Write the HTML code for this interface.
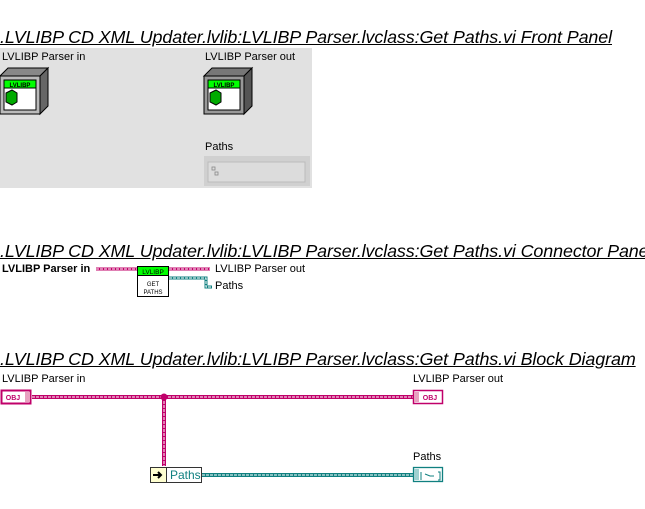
<!DOCTYPE html><html><head><style>
body{margin:0;width:645px;height:509px;background:#fff;position:relative;overflow:hidden;font-family:"Liberation Sans",sans-serif}
.t{position:absolute;left:0;font-size:17.9px;font-style:italic;text-decoration:underline;white-space:nowrap;color:#000;letter-spacing:-0.1px}
.l{position:absolute;font-size:11px;white-space:nowrap;color:#000}
</style></head><body>
<div class="t" style="top:27px">.LVLIBP CD XML Updater.lvlib:LVLIBP Parser.lvclass:Get Paths.vi Front Panel</div>
<div style="position:absolute;left:0;top:48px;width:312px;height:140px;background:#e1e1e1"></div>
<div class="l" style="left:2px;top:51px">LVLIBP Parser in</div>
<div class="l" style="left:205px;top:51px">LVLIBP Parser out</div>
<div class="l" style="left:205px;top:141px">Paths</div>
<svg style="position:absolute;left:0;top:0" width="645" height="509">
<g transform="translate(0,68)">
<polygon points="0,8 8,0 48,0 40,8" fill="#888" stroke="#000"/>
<polygon points="40,8 48,0 48,38 40,46" fill="#666" stroke="#000"/>
<rect x="0" y="8" width="40" height="38" fill="#bbb" stroke="#000"/>
<rect x="4" y="12" width="32" height="30" fill="#fff" stroke="#000"/>
<rect x="4" y="12" width="32" height="8" fill="#0f0" stroke="#000"/>
<text x="20" y="19" font-size="6" text-anchor="middle" font-family="Liberation Sans" font-weight="bold">LVLIBP</text>
<polygon points="6,25 12,22 17,25 17,34 12,37 6,34" fill="#0a0" stroke="#000"/>
</g>
<g transform="translate(204,68)">
<polygon points="0,8 8,0 48,0 40,8" fill="#777" stroke="#000"/>
<polygon points="40,8 48,0 48,38 40,46" fill="#555" stroke="#000"/>
<rect x="0" y="8" width="40" height="38" fill="#999" stroke="#000"/>
<rect x="4" y="12" width="32" height="30" fill="#fff" stroke="#000"/>
<rect x="4" y="12" width="32" height="8" fill="#0f0" stroke="#000"/>
<text x="20" y="19" font-size="6" text-anchor="middle" font-family="Liberation Sans" font-weight="bold">LVLIBP</text>
<polygon points="6,25 12,22 17,25 17,34 12,37 6,34" fill="#0a0" stroke="#000"/>
</g>
<rect x="204" y="156" width="106" height="30" fill="#d0d0d0"/>
<rect x="208" y="162" width="97" height="20" fill="#dcdcdc" stroke="#bbb"/>
<rect x="212" y="167" width="3" height="3" fill="none" stroke="#888" stroke-width=".8"/><rect x="215" y="172" width="3" height="3" fill="none" stroke="#888" stroke-width=".8"/>

<g stroke-width="3">
<line x1="96" y1="269" x2="137" y2="269" stroke="#c0006a"/><line x1="96" y1="269" x2="137" y2="269" stroke="#fff" stroke-width="1" stroke-dasharray="3,1"/>
<line x1="169" y1="269" x2="210" y2="269" stroke="#c0006a"/><line x1="169" y1="269" x2="210" y2="269" stroke="#fff" stroke-width="1" stroke-dasharray="3,1"/>
<polyline points="169,278 206,278 206,287 212,287" fill="none" stroke="#108080"/><polyline points="169,278 206,278 206,287 212,287" fill="none" stroke="#fff" stroke-width="1" stroke-dasharray="3,1"/>
</g>
<rect x="137.5" y="266.5" width="31" height="30" fill="#fff" stroke="#000"/>
<rect x="137.5" y="266.5" width="31" height="9" fill="#0f0" stroke="#000"/>
<text x="153" y="274" font-size="6.5" text-anchor="middle" font-family="Liberation Sans">LVLIBP</text>
<text x="153" y="286" font-size="6" text-anchor="middle" font-family="Liberation Sans">GET</text>
<text x="153" y="294" font-size="6" text-anchor="middle" font-family="Liberation Sans">PATHS</text>

<g stroke-width="4">
<line x1="32" y1="397" x2="414" y2="397" stroke="#c0006a"/><line x1="32" y1="397" x2="414" y2="397" stroke="#fff" stroke-width="1" stroke-dasharray="3,1"/>
<line x1="164" y1="397" x2="164" y2="466" stroke="#c0006a"/><line x1="164" y1="397" x2="164" y2="466" stroke="#fff" stroke-width="1" stroke-dasharray="3,1"/>
<line x1="202" y1="475" x2="414" y2="475" stroke="#108080"/><line x1="202" y1="475" x2="414" y2="475" stroke="#fff" stroke-width="1" stroke-dasharray="3,1"/>
</g>
<circle cx="164" cy="397" r="3.5" fill="#c0006a"/>
<rect x="1.5" y="390.5" width="29" height="13" fill="#fff" stroke="#c0006a" stroke-width="2"/>
<rect x="25" y="392" width="5" height="10" fill="#e8a0c0"/>
<text x="13" y="400" font-size="7" text-anchor="middle" font-weight="bold" fill="#c0006a" font-family="Liberation Sans">OBJ</text>
<rect x="413.5" y="390.5" width="29" height="13" fill="#fff" stroke="#c0006a" stroke-width="1.5"/>
<rect x="414" y="392" width="5" height="10" fill="#e8a0c0"/>
<text x="430" y="400" font-size="7" text-anchor="middle" font-weight="bold" fill="#c0006a" font-family="Liberation Sans">OBJ</text>
<rect x="150.5" y="467.5" width="16" height="15" fill="#ffffd0" stroke="#333"/>
<path d="M153 475h8M158 472l3 3-3 3" stroke="#000" stroke-width="2" fill="none"/>
<rect x="166.5" y="467.5" width="35" height="15" fill="#fff" stroke="#333"/>
<text x="170" y="479" font-size="12" fill="#108080" font-family="Liberation Sans">Paths</text>
<rect x="413.5" y="467.5" width="29" height="14" fill="#fff" stroke="#108080" stroke-width="1.3"/>
<rect x="414" y="469" width="5" height="11" fill="#a0d0d0"/>
<path d="M421 472v8M425 474l5 2h4M438 472h2v8h-2" stroke="#108080" fill="none"/>
</svg>
<div class="t" style="top:241px">.LVLIBP CD XML Updater.lvlib:LVLIBP Parser.lvclass:Get Paths.vi Connector Pane</div>
<div class="l" style="left:2px;top:263px;font-weight:bold">LVLIBP Parser in</div>
<div class="l" style="left:215px;top:263px">LVLIBP Parser out</div>
<div class="l" style="left:215px;top:280px">Paths</div>
<div class="t" style="top:349px">.LVLIBP CD XML Updater.lvlib:LVLIBP Parser.lvclass:Get Paths.vi Block Diagram</div>
<div class="l" style="left:2px;top:373px">LVLIBP Parser in</div>
<div class="l" style="left:413px;top:373px">LVLIBP Parser out</div>
<div class="l" style="left:413px;top:451px">Paths</div>
</body></html>
